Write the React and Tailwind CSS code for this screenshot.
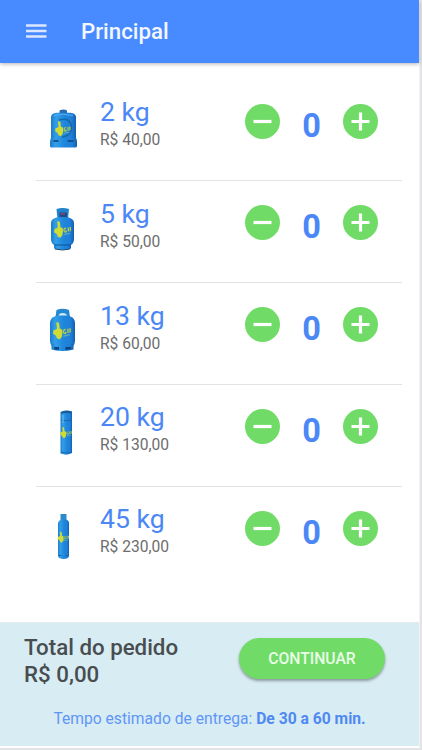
const products = [
    { weight: "2 kg", price: "R$ 40,00", Bottle: BottleP2 },
    { weight: "5 kg", price: "R$ 50,00", Bottle: BottleP5 },
    { weight: "13 kg", price: "R$ 60,00", Bottle: BottleP13 },
    { weight: "20 kg", price: "R$ 130,00", Bottle: BottleP20 },
    { weight: "45 kg", price: "R$ 230,00", Bottle: BottleP45 },
];

// Shared metal gradient, one id per bottle
function Metal({ id }) {
    return (
        <defs>
            <linearGradient id={id} x1="0" x2="1" y1="0" y2="0">
                <stop offset="0" stopColor="#1b7ccb" />
                <stop offset="0.2" stopColor="#339fe9" />
                <stop offset="0.55" stopColor="#1e86db" />
                <stop offset="0.82" stopColor="#1f7fd8" />
                <stop offset="1" stopColor="#155fae" />
            </linearGradient>
        </defs>
    );
}

// Yellow thumbs up with the little brand squiggle beside it
function Thumb({ transform }) {
    return (
        <g transform={transform}>
            <path d="M2.4 0 Q4.4 -0.8 4.9 0.8 L5.4 5.2 L7.4 6 Q8.2 9 7.2 12.5 L5.2 14.8 L3 13.8 L2 11.4 L-0.4 9.8 L0 6.8 L2.2 6 L3 5.2 Z" fill="#cfdc36" />
            <path d="M10.6 6 Q8.6 6 8.6 8 Q8.8 10 10.6 9.4 V8 M12.6 5.4 V9.2 M14.4 5 V8.8" fill="none" stroke="#b4cc48" strokeWidth="1.2" />
            <path d="M8.5 11.8 L14 10.8" stroke="#64adb0" strokeWidth="1.1" />
        </g>
    );
}

function BottleP2() {
    return (
        <svg width="40" height="60" viewBox="0 0 40 60">
            <Metal id="p2" />
            <path d="M16.5 12 V8.5 Q20.5 6.5 24 8.5 V12 Z" fill="#2a6cb0" />
            <path d="M8 37 V15 Q8 11.5 13 10.7 H27.5 Q33 11.5 33 15 V37 Z" fill="url(#p2)" />
            <path d="M11 13.5 Q20 11 30 13.5" fill="none" stroke="#57aeee" strokeWidth="1" />
            <path d="M8 36 H33 Q34.2 38 34 40 V44 Q34 45.5 32 45.5 H8.5 Q7 45.5 7 44 V40 Q7 38 8 36 Z" fill="url(#p2)" />
            <path d="M10.5 39 H15.5 M24.5 39 H30.5" stroke="#0a427a" strokeWidth="1.6" />
            <path d="M16 18 Q28 14.5 28.5 26 Q28 34 19 35" fill="none" stroke="#1668a8" strokeWidth="1.6" />
            <Thumb transform="translate(12.5 19.5)" />
        </svg>
    );
}

function BottleP5() {
    return (
        <svg width="40" height="60" viewBox="0 0 40 60">
            <Metal id="p5" />
            <path d="M13.5 6 Q19.5 4 26 6 L25 16 H14.5 Z" fill="#1f82cd" />
            <path d="M16.5 9.5 H24 V14 H16.5 Z" fill="#1c4f85" />
            <path d="M17.5 10.8 H22" stroke="#8a4470" strokeWidth="1.6" />
            <path d="M8 20 Q8 16 14 14.3 H25 Q31 16 31 20 V36 Q31 40 28 42 H11 Q8 40 8 36 Z" fill="url(#p5)" />
            <path d="M11 41 H28 V45.5 Q19.5 48 11 45.5 Z" fill="url(#p5)" />
            <path d="M12 42 H27" stroke="#0d5493" strokeWidth="1" />
            <path d="M12 46 Q19.5 48 27 46" fill="none" stroke="#174873" strokeWidth="1" />
            <Thumb transform="translate(11.5 18.5) scale(1.1)" />
        </svg>
    );
}

function BottleP13() {
    return (
        <svg width="40" height="60" viewBox="0 0 40 60">
            <Metal id="p13" />
            <path d="M12.5 12 L13.5 5 Q19.5 2.5 26 5 L27 12 Z" fill="#2389d3" />
            <path d="M15.5 10.5 Q16 8 19.5 8 Q23.5 8 24 10.5 Z" fill="#cfe6f5" />
            <path d="M7 18 Q7 13 12.5 11 H26.5 Q32 13 32 18 V36 Q32 39 30 41 H9 Q7 39 7 36 Z" fill="url(#p13)" />
            <path d="M8.5 39 H30.5 V44.5 Q19.5 47.5 8.5 44.5 Z" fill="url(#p13)" />
            <path d="M11 42 H16 V44.8 H11.5 Z M22.5 42 H28 V44.2 L22.5 45 Z" fill="#0c457f" />
            <Thumb transform="translate(10.5 17.5) scale(1.15)" />
        </svg>
    );
}

function BottleP20() {
    return (
        <svg width="40" height="60" viewBox="0 0 40 60">
            <Metal id="p20" />
            <path d="M17.5 5 Q23 2.5 29 4.5 V46 Q23.5 49 17.5 46.5 Z" fill="url(#p20)" />
            <path d="M18 5 Q23 3 28.5 4.5 V6.5 Q23 5.2 18 6.8 Z" fill="#1b5c94" />
            <path d="M18 13 Q23 14.5 29 13" fill="none" stroke="#1767ab" strokeWidth="1" />
            <path d="M20 8 V16" stroke="#5fb0e8" strokeWidth="1.4" />
            <path d="M18 45 Q23 47 29 45" fill="none" stroke="#176aae" strokeWidth="1" />
            <Thumb transform="translate(17.5 20.5) scale(0.74 0.72)" />
        </svg>
    );
}

function BottleP45() {
    return (
        <svg width="40" height="60" viewBox="0 0 40 60">
            <Metal id="p45" />
            <path d="M17.5 5 H23.5 V12 H17.5 Z" fill="#2b8aca" />
            <path d="M15 14 Q15.5 11.5 18 10.5 H23 Q26 11.5 26 14 V47 Q25.5 50 20.5 50 Q15.5 50 15 47 Z" fill="url(#p45)" />
            <path d="M16 46.5 H18.5 M22.5 46.5 H25" stroke="#1664a8" strokeWidth="1.2" />
            <Thumb transform="translate(15 23) scale(0.73 0.72)" />
        </svg>
    );
}

function RoundButton({ plus, label }) {
    return (
        <button aria-label={label} className="w-[35px] h-[35px] rounded-full bg-[#70dc67]">
            <svg width="35" height="35" viewBox="0 0 35 35">
                <path d={plus ? "M8.5 17.5 H26.5 M17.5 8.5 V26.5" : "M8.5 17.5 H26.5"} stroke="#fff" strokeWidth="3.2" />
            </svg>
        </button>
    );
}

function ProductRow({ weight, price, Bottle, last }) {
    return (
        <div className={`flex items-start h-[101.8px] ml-9 mr-[17px] pl-[7px] ${last ? "" : "border-b-[1.5px] border-[#e2e2e2]"}`}>
            <div className="pt-[22px] w-[57px]">
                <Bottle />
            </div>
            <div className="w-[145px] pt-[16.5px]">
                <h2 className="text-[26.6px] leading-8 text-[#4b87f5]">{weight}</h2>
                <p className="text-[15.6px] leading-6 text-[#6d6d6d]">{price}</p>
            </div>
            <div className="flex items-start pt-6">
                <RoundButton label="Remover" />
                <span className="w-[63px] pt-0.5 text-center text-[32.5px] leading-10 font-bold text-[#4b87f5]">0</span>
                <RoundButton plus label="Adicionar" />
            </div>
        </div>
    );
}

export default function App() {
    return (
        <div className="w-[422px] h-[750px] overflow-hidden bg-[#e4e4e6] pr-[2px] pb-[2px] font-['Roboto',sans-serif]">
            <div className="flex flex-col h-[748px] bg-white border-r border-[#f2f2f4]">
                <header className="relative flex items-center h-[63px] shrink-0 bg-[#488aff] pl-[26px] shadow-[0_1px_4px_rgba(0,0,0,0.3)]">
                    <svg width="21" height="15" viewBox="0 0 21 15" className="mr-[34px]">
                        <path d="M0 1.5 H20.5 M0 7 H20.5 M0 12.5 H20.5" stroke="#dce8ff" strokeWidth="2.4" />
                    </svg>
                    <h1 className="text-[22.3px] font-medium text-[#f3f7ff]">Principal</h1>
                </header>

                <main className="flex-1 pt-[16.5px]">
                    {products.map((product, i) => (
                        <ProductRow key={product.weight} {...product} last={i === products.length - 1} />
                    ))}
                </main>

                <footer className="h-[124px] mb-[2px] shrink-0 bg-[#d8ecf4] border-t border-[#e4eaec]">
                    <div className="flex justify-between pl-6 pr-[34px] pt-[11px]">
                        <div className="text-[22.3px] leading-[27px] font-medium text-[#484d50]">
                            <p>Total do pedido</p>
                            <p>R$ 0,00</p>
                        </div>
                        <button className="w-[146px] h-[41px] mt-1 rounded-full bg-[#70dc67] text-[15.7px] font-medium text-[#e9fce7] shadow-[0_2px_3px_rgba(0,0,0,0.35)]">
                            CONTINUAR
                        </button>
                    </div>
                    <p className="mt-[19px] text-center text-[15.65px] leading-6 text-[#6196f6]">
                        Tempo estimado de entrega: <b className="font-bold text-[#4f89f2]">De 30 a 60 min.</b>
                    </p>
                </footer>
            </div>
        </div>
    );
}
